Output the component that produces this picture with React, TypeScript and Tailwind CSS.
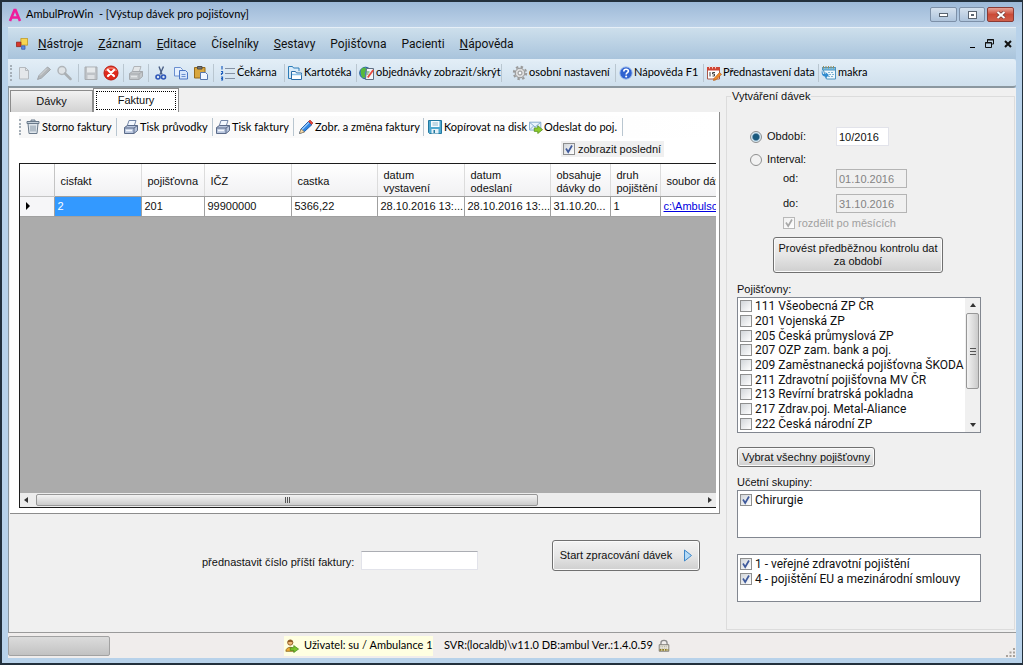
import React, { useState } from 'react';

const SANS = "font-['Liberation_Sans',Arial,sans-serif]";
const COMPACT = "font-[Roboto,'Liberation_Sans',sans-serif]";
const HUMANIST = "font-[Lato,'Open_Sans',sans-serif]";

const insurers = [
  '111 Všeobecná ZP ČR',
  '201 Vojenská ZP',
  '205 Česká průmyslová ZP',
  '207 OZP zam. bank a poj.',
  '209 Zaměstnanecká pojišťovna ŠKODA',
  '211 Zdravotní pojišťovna MV ČR',
  '213 Revírní bratrská pokladna',
  '217 Zdrav.poj. Metal-Aliance',
  '222 Česká národní ZP',
];

const menu = [
  ['N', 'ástroje'],
  ['Z', 'áznam'],
  ['E', 'ditace'],
  ['', 'Číselníky'],
  ['S', 'estavy'],
  ['', 'Pojišťovna'],
  ['', 'Pacienti'],
  ['N', 'ápověda'],
];

const columns = [
  { label: 'cisfakt', value: '2', width: 'w-[87px]' },
  { label: 'pojišťovna', value: '201', width: 'w-[63px]' },
  { label: 'IČZ', value: '99900000', width: 'w-[87px]' },
  { label: 'castka', value: '5366,22', width: 'w-[86px]' },
  { label: 'datum\nvystavení', value: '28.10.2016 13:...', width: 'w-[87px]' },
  { label: 'datum\nodeslaní', value: '28.10.2016 13:...', width: 'w-[86px]' },
  { label: 'obsahuje\ndávky do', value: '31.10.20...', width: 'w-[60px]' },
  { label: 'druh\npojištění', value: '1', width: 'w-[50px]' },
];

type IconProps = { children: React.ReactNode; className?: string };

const Svg = ({ children, className = 'size-4' }: IconProps) => (
  <svg viewBox="0 0 16 16" className={`${className} shrink-0`} fill="none" aria-hidden="true">
    {children}
  </svg>
);

const NewIcon = () => (
  <Svg>
    <path d="M3.500 2.500h6l3 3v8.500h-9z" fill="#e4e7ea" stroke="#b4b9be" />
    <path d="M9.500 2.500v3h3" stroke="#b4b9be" />
  </Svg>
);

const GrayPencilIcon = () => (
  <Svg>
    <path d="M1.500 14.500l1.500-4 8.500-8.500 3 2.500-9 8.500z" fill="#b3b7ba" stroke="#a0a4a8" />
    <path d="M4 10.500l7-7" stroke="#d8dbde" />
  </Svg>
);

const GraySearchIcon = () => (
  <Svg>
    <circle cx="6" cy="5.500" r="4" fill="#dfe3e6" stroke="#b0b5b9" strokeWidth="1.500" />
    <path d="M9 8.500l5.500 5.500" stroke="#aaafb3" strokeWidth="2.500" strokeLinecap="round" />
  </Svg>
);

const GraySaveIcon = () => (
  <Svg>
    <path d="M2 2h12v12.500H2z" fill="#bfc3c7" stroke="#a9adb1" />
    <path d="M4 2.500h8v5H4z" fill="#e6e9eb" />
    <path d="M4.500 10h7v4h-7z" fill="#dde0e3" />
  </Svg>
);

const CancelIcon = () => (
  <Svg>
    <circle cx="8" cy="8" r="7" fill="#e02a1c" stroke="#b81c12" />
    <path d="M2.500 6a6 5 0 0111 0" stroke="#f47c6c" strokeWidth="1.500" />
    <path d="M5 5l6 6M11 5l-6 6" stroke="#fff" strokeWidth="2.200" strokeLinecap="round" />
  </Svg>
);

const PrinterIcon = ({ muted }: { muted?: boolean }) => (
  <Svg>
    <path d="M6 1.500h7l-2 6H4z" fill={muted ? '#e3e6e8' : '#f3f8ff'} stroke={muted ? '#b0b4b8' : '#7487a8'} />
    <path d="M1.500 8.500l3-2h10v5l-3.500 3h-9.500z" fill={muted ? '#c3c7ca' : '#b9c6de'} stroke={muted ? '#a6aaae' : '#5b6b89'} />
    <path d="M1.500 9h9.500l3.500-2.500M11 9v5" stroke={muted ? '#a6aaae' : '#5b6b89'} />
    <path d="M3 11.500h6" stroke={muted ? '#e3e6e8' : '#f5f8fd'} strokeWidth="1.500" />
  </Svg>
);

const CutIcon = () => (
  <Svg>
    <path d="M6 1.500l3 8M10.500 1.500l-3.500 8" stroke="#4a5f86" strokeWidth="1.400" />
    <circle cx="5" cy="12" r="2" stroke="#2f57b8" strokeWidth="1.600" />
    <circle cx="10.500" cy="12" r="2" stroke="#2f57b8" strokeWidth="1.600" />
  </Svg>
);

const CopyIcon = () => (
  <Svg>
    <path d="M1.500 2.500h6l2 2v6.500h-8z" fill="#e6f0fd" stroke="#6a8fd0" />
    <path d="M6.500 5.500h6l2 2v6.500h-8z" fill="#d4e4fb" stroke="#4a74c4" />
    <path d="M8.500 9.500h4M8.500 11.500h4" stroke="#6a8fd0" />
  </Svg>
);

const PasteIcon = () => (
  <Svg>
    <path d="M1.500 2.500h10.500v10.500H1.500z" fill="#d9a73e" stroke="#946a1c" />
    <path d="M4.500 1.500h4.500v2.500H4.500z" fill="#777" stroke="#4c4c4c" />
    <path d="M7.500 7.500h5l2 2v5h-7z" fill="#f0f5ff" stroke="#5877ae" />
  </Svg>
);

const ListIcon = () => (
  <Svg>
    <path d="M5 3.500h10M5 8.500h10M5 13.500h10" stroke="#8492a5" />
    <path d="M2 1v3.500M1 6.500h1.500v2H1.500v1.500M1 12h1.500v3H1M1 13.500h1.500" stroke="#1d5fbf" strokeWidth="1.200" />
  </Svg>
);

const CardsIcon = () => (
  <Svg>
    <path d="M1.500 5V1.500h4l1 1.500h5.500v3" fill="#d9ecfb" stroke="#2d7db8" />
    <path d="M1.500 4v9.500h2.500" stroke="#2d7db8" />
    <path d="M4.500 6.500h4l1 1.500h5v6.500h-10z" fill="#fff" stroke="#2a6da8" />
    <path d="M5 9.500h9.500" stroke="#8dc3ea" strokeWidth="1.500" />
  </Svg>
);

const OrdersIcon = () => (
  <Svg>
    <circle cx="6.500" cy="8" r="5.800" fill="#3e8ede" stroke="#235a96" />
    <path d="M2 4.500c3-3 5-2 5 0s-2 3-1 5 0 3-1.500 3.500S1 8 2 4.500z" fill="#58b83a" />
    <path d="M7.500 3.500h7v11h-8z" fill="#f3f6fa" stroke="#5f6f83" />
    <path d="M8 12l5.500-7.500 1.500 1-5.500 7.500z" fill="#e94b3f" />
    <path d="M7.500 7h3M7.500 9h2" stroke="#3c9a46" />
  </Svg>
);

const GearIcon = () => (
  <Svg>
    <circle cx="8" cy="8" r="6.200" stroke="#9b9b9b" strokeWidth="2" strokeDasharray="2.400 2.460" />
    <circle cx="8" cy="8" r="4.800" fill="#dcdcdc" stroke="#929292" />
    <circle cx="8" cy="8" r="2" fill="#f4f8fb" stroke="#929292" />
  </Svg>
);

const HelpIcon = () => (
  <Svg className="size-[14px]">
    <circle cx="8" cy="8" r="7" fill="#2f62d0" stroke="#8fb0ea" />
    <path d="M5.500 6.200c0-3.400 5.200-3.200 5.200-.4 0 1.800-2.500 1.900-2.500 3.900" stroke="#fff" strokeWidth="1.900" />
    <circle cx="8.200" cy="12" r="1.200" fill="#fff" />
  </Svg>
);

const CalendarIcon = () => (
  <Svg>
    <path d="M1.500 2.500h12v11.500h-12z" fill="#fff" stroke="#a8584a" />
    <path d="M1 2h13v3.500H1z" fill="#cf4534" />
    <path d="M3.500 1v2.500M6.500 1v2.500M9.500 1v2.500" stroke="#f6d4cd" />
    <path d="M4 7v4.500M9 7.500H6.500v1.500h2v2h-2" stroke="#444" />
    <path d="M8 13.500l5.500-6 2 1.800-5.500 5.500-2.500.7z" fill="#f18a2c" stroke="#b75d13" strokeWidth=".7" />
  </Svg>
);

const MacroIcon = () => (
  <Svg>
    <path d="M1.500 2.500h13v11.500h-9z" fill="#eef7fd" stroke="#4d94c0" />
    <path d="M1.500 2.500h13v2.500h-13z" fill="#7cc3e8" stroke="#4d94c0" />
    <path d="M2.500 1v2.500M5 1v2.500M7.500 1v2.500M10 1v2.500M12.500 1v2.500" stroke="#9a8f5c" />
    <path d="M7 7.500h6M8 9.500h5M7 11.500h6" stroke="#7fb4d2" strokeDasharray="2 1" />
    <path d="M1 5l1 4h2.500V7L8 10l-3.500 3.500v-2C1.500 11.500 0 9 1 5z" fill="#2f8bd0" />
  </Svg>
);

const TrashIcon = () => (
  <Svg>
    <path d="M3 4.500h10l-1 10H4z" fill="#dfe6ec" stroke="#69798a" />
    <path d="M2 2.500h12v2H2zM6 2.500V1h4v1.500" fill="#c4d0da" stroke="#69798a" />
    <path d="M6 6.500v6M8 6.500v6M10 6.500v6" stroke="#8394a4" />
  </Svg>
);

const PencilIcon = () => (
  <Svg>
    <path d="M1.500 14.500l1.500-4.500 7.500-7.500 3.500 3-8 7.500z" fill="#2f86e4" stroke="#1b5cae" />
    <path d="M4 10.500l7-7" stroke="#9dcbf8" strokeWidth="1.300" />
    <path d="M10.500 2.500L12 1l3 3-1.500 1.500z" fill="#e8443a" stroke="#a62a22" strokeWidth=".6" />
    <path d="M1.500 14.500l1.500-4.500 3.500 3z" fill="#f7dcae" stroke="#9c7c49" strokeWidth=".6" />
  </Svg>
);

const DiskIcon = () => (
  <Svg>
    <path d="M1.500 1.500h13v13h-12l-1-1z" fill="#4fa8cf" stroke="#22789f" />
    <path d="M4 2h8.500v6H4z" fill="#f6fbfe" />
    <path d="M5.500 4h5.500M5.500 6h5.500" stroke="#8bb7cb" />
    <path d="M4.500 10h7v4.500h-7z" fill="#e6f1f6" />
    <path d="M6.500 11h1.500v3H6.500z" fill="#22789f" />
  </Svg>
);

const MailIcon = () => (
  <Svg className="size-[14px]">
    <path d="M.5 2.500h13v9H.5z" fill="#e9f3fc" stroke="#7aa3c8" />
    <path d="M1 3l6 5 6-5M1 11l4-4M13 11L9 7" stroke="#7aa3c8" />
    <path d="M6 9h4V6.500l5.500 4.500-5.500 4.500V13H6z" fill="#8ecb2c" stroke="#4a8a12" strokeWidth=".8" />
  </Svg>
);

const UserIcon = () => (
  <Svg className="size-[14px]">
    <circle cx="6" cy="4" r="3" fill="#f0b878" stroke="#8c5a22" />
    <path d="M3 4c0-4 6-4 6 0-2-1-4-1-6 0z" fill="#8a5420" />
    <path d="M1 14c0-6 10-6 10 0z" fill="#f3ae35" stroke="#8c6a22" />
    <path d="M6 10h4V7.500l5.500 4-5.500 4V13H6z" fill="#7cc42a" stroke="#3e8414" strokeWidth=".8" />
  </Svg>
);

const LockIcon = () => (
  <Svg className="size-[14px]">
    <path d="M4.500 7V4.500a3.500 3 0 017 0V7" stroke="#8b8b8b" strokeWidth="1.500" />
    <path d="M2.500 6.500h11v7.500h-11z" fill="#e9e6da" stroke="#77756e" />
    <path d="M3 12.500h10" stroke="#8d7a1e" strokeWidth="2" strokeDasharray="2 1" />
    <path d="M4 8.500h8M4 10.500h8" stroke="#aaa89e" strokeDasharray="1 1" />
  </Svg>
);

const FormsIcon = () => (
  <Svg className="size-3">
    <path d="M6.500.5h9v9h-9z" fill="#f8d552" stroke="#b78f1a" />
    <path d="M.5 5.500h6v6h-6z" fill="#d8362a" stroke="#8e1f17" />
    <path d="M7.500 10.500h4.500v4.500H7.500z" fill="#5d8be4" stroke="#3559a8" />
  </Svg>
);

const Grip = () => (
  <span className="flex h-4 w-[2px] shrink-0 flex-col justify-between">
    {[0, 1, 2, 3, 4].map(i => <span key={i} className="size-[2px] bg-[#a5afb8]" />)}
  </span>
);

const Separator = () => <span className="h-[18px] w-px shrink-0 bg-[#b9c6d0]" />;

interface ToolButtonProps {
  icon: React.ReactNode;
  label?: string;
  title?: string;
  className?: string;
}

const ToolButton = ({ icon, label, title, className = '' }: ToolButtonProps) => (
  <button type="button" aria-label={label ?? title} className={`flex shrink-0 items-center gap-px whitespace-nowrap ${className}`}>
    {icon}
    {label && <span>{label}</span>}
  </button>
);

interface CheckProps {
  label: string;
  checked?: boolean;
  disabled?: boolean;
  className?: string;
}

const Check = ({ label, checked = false, disabled, className = '' }: CheckProps) => {
  const [on, setOn] = useState(checked);
  return (
    <label className={`flex items-center gap-[3px] whitespace-nowrap ${disabled ? 'text-[#a0a0a0]' : ''} ${className}`}>
      <span className="relative flex size-3 shrink-0">
        <input
          type="checkbox"
          checked={on}
          disabled={disabled}
          onChange={e => setOn(e.target.checked)}
          className="size-3 appearance-none border border-[#8e8f8f] bg-linear-to-br from-[#d2d6da] to-white disabled:border-[#b8b8b8] disabled:from-[#f0f0f0]"
        />
        {on && (
          <svg viewBox="0 0 12 12" className="pointer-events-none absolute inset-0 size-3" fill="none" aria-hidden="true">
            <path d="M3 5.500l2.200 3.500L9 2.500" stroke={disabled ? '#a8a8a8' : '#3f5a9c'} strokeWidth="1.700" />
          </svg>
        )}
      </span>
      <span>{label}</span>
    </label>
  );
};

const BUTTON = 'rounded-[3px] border border-[#707070] bg-linear-to-b from-[#f3f3f3] via-[#e6e6e6] to-[#cfcfcf] shadow-[inset_0_0_0_1px_#fbfbfb]';

const WindowButtons = () => (
  <div className="flex gap-[2px]">
    <button type="button" aria-label="Minimalizovat" className="flex h-[15px] w-[27px] items-center justify-center rounded-[2px] border border-[#7d90a8] bg-linear-to-b from-[#d5e1ee] to-[#aec4dc]">
      <span className="h-1 w-[9px] border border-[#5a6572] bg-white" />
    </button>
    <button type="button" aria-label="Obnovit" className="flex h-[15px] w-[26px] items-center justify-center rounded-[2px] border border-[#7d90a8] bg-linear-to-b from-[#d5e1ee] to-[#aec4dc]">
      <span className="flex h-2 w-[9px] items-center justify-center border border-[#5a6572] bg-white">
        <span className="h-[2px] w-[3px] bg-[#5a6572]" />
      </span>
    </button>
    <button type="button" aria-label="Zavřít" className="flex h-[15px] w-[27px] items-center justify-center rounded-[2px] border border-[#8a3a34] bg-linear-to-b from-[#e5a196] via-[#cb4a37] to-[#d0604c]">
      <svg viewBox="0 0 10 8" className="h-2 w-[10px]" aria-hidden="true">
        <path d="M1.500 1l7 6M8.500 1l-7 6" stroke="#6b3a38" strokeWidth="3.400" />
        <path d="M1.500 1l7 6M8.500 1l-7 6" stroke="#fff" strokeWidth="2" />
      </svg>
    </button>
  </div>
);

const MainToolbar = () => (
  <div className={`flex h-[29px] items-center overflow-hidden rounded-r-[3px] border-b-2 border-[#8b979f] bg-linear-to-b from-[#e3eef7] to-[#cfe0ed] pl-[2px] text-[11px] text-black ${HUMANIST}`}>
    <Grip />
    <div className="flex items-center gap-1 pl-1 pr-[6px]">
      <ToolButton title="Nový" icon={<NewIcon />} />
      <ToolButton title="Upravit" icon={<GrayPencilIcon />} />
      <ToolButton title="Hledat" icon={<GraySearchIcon />} />
    </div>
    <Separator />
    <div className="flex items-center gap-1 px-1">
      <ToolButton title="Uložit" icon={<GraySaveIcon />} />
      <ToolButton title="Zrušit" icon={<CancelIcon />} />
    </div>
    <Separator />
    <ToolButton title="Tisk" icon={<PrinterIcon muted />} className="px-1" />
    <Separator />
    <div className="flex items-center gap-1 px-1">
      <ToolButton title="Vyjmout" icon={<CutIcon />} />
      <ToolButton title="Kopírovat" icon={<CopyIcon />} />
      <ToolButton title="Vložit" icon={<PasteIcon />} />
    </div>
    <Separator />
    <ToolButton label="Čekárna" icon={<ListIcon />} className="w-[70px] pl-[6px]" />
    <Separator />
    <ToolButton label="Kartotéka" icon={<CardsIcon />} className="w-[71px] pl-[2px]" />
    <Separator />
    <ToolButton label="objednávky zobrazit/skrýt" icon={<OrdersIcon />} className="w-[144px] pl-[2px]" />
    <Separator />
    <ToolButton label="osobní nastavení" icon={<GearIcon />} className="w-[113px] pl-[10px]" />
    <Separator />
    <ToolButton label="Nápověda F1" icon={<HelpIcon />} className="w-[87px] pl-[3px]" />
    <Separator />
    <ToolButton label="Přednastavení data" icon={<CalendarIcon />} className="w-[114px] pl-[2px]" />
    <Separator />
    <ToolButton label="makra" icon={<MacroIcon />} className="pl-[2px]" />
  </div>
);

const InvoiceTable = () => (
  <div className="flex min-h-0 flex-1 flex-col overflow-hidden border border-r-0 border-[#1c1c1c] bg-[#ababab]">
    <div className="min-h-0 flex-1 overflow-hidden">
      <table className="w-[800px] table-fixed border-collapse text-[11px]">
        <thead>
          <tr className="h-8 bg-linear-to-b from-white to-[#f1f1f3] text-left leading-[13px]">
            <th className="w-[34px] border-r border-b border-[#c4c4c4]" aria-label="řádek" />
            {columns.map(col => (
              <th key={col.label} className={`${col.width} border-r border-b border-r-[#dcdcdc] border-b-[#a0a0a0] pt-1 pl-[6px] font-normal whitespace-pre`}>{col.label}</th>
            ))}
            <th className="border-b border-[#a0a0a0] pt-1 pl-[6px] font-normal whitespace-nowrap">soubor dávky</th>
          </tr>
        </thead>
        <tbody>
          <tr className="h-5 bg-white">
            <td className="border-r border-b border-[#a0a0a0] bg-[#f6f6f8]">
              <svg viewBox="0 0 4 8" className="ml-[6px] h-2 w-1" aria-hidden="true"><path d="M0 0l4 4-4 4z" fill="#000" /></svg>
            </td>
            {columns.map((col, i) => (
              <td key={col.label} className={`overflow-hidden border-r border-b border-[#a0a0a0] pl-[3px] whitespace-nowrap ${i === 0 ? 'bg-[#3399ff] text-white' : ''}`}>{col.value}</td>
            ))}
            <td className="border-b border-[#a0a0a0] pl-[3px]">
              <a href="#soubor" className="text-[#0000e0] underline">c:\Ambulsoft</a>
            </td>
          </tr>
        </tbody>
      </table>
    </div>
    <div className="flex h-[14px] shrink-0 items-center bg-[#ececec] px-1">
      <svg viewBox="0 0 4 6" className="h-[6px] w-1" aria-hidden="true"><path d="M4 0L0 3l4 3z" fill="#333" /></svg>
      <div className="ml-2 flex h-3 w-[73%] items-center justify-center gap-px rounded-[2px] border border-[#979797] bg-linear-to-b from-[#f3f3f3] to-[#cbcbcb]">
        {[0, 1, 2].map(i => <span key={i} className="h-[6px] w-px bg-[#555]" />)}
      </div>
      <svg viewBox="0 0 4 6" className="ml-auto h-[6px] w-1" aria-hidden="true"><path d="M0 0l4 3-4 3z" fill="#333" /></svg>
    </div>
  </div>
);

const InvoicePanel = () => (
  <div className="flex h-[402px] flex-col border-r border-b border-[#8c8c8c] bg-white pt-1 pr-[3px] pb-[5px] pl-[9px]">
    <div className={`flex h-[22px] shrink-0 items-center overflow-hidden bg-linear-to-r from-[#f7f7f7] to-white text-[11px] text-black ${HUMANIST}`}>
      <Grip />
      <ToolButton label="Storno faktury" icon={<TrashIcon />} className="w-[95px] pl-1" />
      <Separator />
      <ToolButton label="Tisk průvodky" icon={<PrinterIcon />} className="w-[95px] pl-[6px]" />
      <Separator />
      <ToolButton label="Tisk faktury" icon={<PrinterIcon />} className="w-20 pl-[2px]" />
      <Separator />
      <ToolButton label="Zobr. a změna faktury" icon={<PencilIcon />} className="w-[129px] pl-1" />
      <Separator />
      <ToolButton label="Kopírovat na disk" icon={<DiskIcon />} className="w-[102px] pl-[3px]" />
      <ToolButton label="Odeslat do poj." icon={<MailIcon />} className="w-24 pl-[3px]" />
      <Separator />
    </div>
    <div className="flex h-[25px] shrink-0 justify-end pt-[3px] pr-[52px]">
      <Check label="zobrazit poslední" checked className="h-4 w-[103px] bg-[#f0f0f0] px-[2px]" />
    </div>
    <InvoiceTable />
  </div>
);

const TextField = ({ id, value, disabled }: { id: string; value: string; disabled?: boolean }) => (
  <input
    id={id}
    type="text"
    defaultValue={value}
    disabled={disabled}
    className="h-[19px] w-[71px] border border-[#b4b4b4] bg-[#f0f0f0] px-[2px] text-[#838383]"
  />
);

const BatchForm = () => {
  const [mode, setMode] = useState('period');
  const radio = 'size-3 shrink-0 appearance-none rounded-full border border-[#8e8f8f] bg-[#f2f2f2] checked:bg-radial checked:from-[#1a5a7e] checked:from-40% checked:to-[#d3e8f3] checked:to-60%';

  return (
    <fieldset className="flex w-[289px] shrink-0 flex-col border border-[#dcdcdc] px-[10px] text-[11px]">
      <legend className="-ml-[6px] h-4 px-px leading-4">Vytváření dávek</legend>
      <div className="mt-2 ml-[13px] flex h-[34px] items-end">
        <label className="flex h-[19px] w-[86px] items-center gap-[5px]">
          <input type="radio" name="mode" checked={mode === 'period'} onChange={() => setMode('period')} className={radio} />
          Období:
        </label>
        <input aria-label="Období" type="text" defaultValue="10/2016" className="h-[19px] w-[53px] border border-[#e2e3ea] bg-white px-[2px]" />
      </div>
      <label className="mt-1 ml-[13px] flex h-[19px] items-center gap-[5px]">
        <input type="radio" name="mode" checked={mode === 'interval'} onChange={() => setMode('interval')} className={radio} />
        Interval:
      </label>
      <div className="ml-[46px] grid grid-cols-[53px_71px] items-center gap-y-[6px]">
        <label htmlFor="from">od:</label>
        <TextField id="from" value="01.10.2016" disabled />
        <label htmlFor="to">do:</label>
        <TextField id="to" value="31.10.2016" disabled />
      </div>
      <Check label="rozdělit po měsících" checked disabled className="mt-[2px] ml-[46px] h-4" />
      <button type="button" className={`${BUTTON} mt-[6px] ml-9 h-9 w-[170px] leading-[13px]`}>
        Provést předběžnou kontrolu dat za období
      </button>

      <div className="mt-2 h-4 leading-4">Pojišťovny:</div>
      <div className={`flex h-[136px] w-[244px] border border-[#828790] bg-white text-[12px] ${COMPACT}`}>
        <div className="flex min-w-0 flex-1 flex-col py-px pl-[2px]">
          {insurers.map(name => <Check key={name} label={name} className="flex-1 leading-[14px]" />)}
        </div>
        <div className="flex w-[15px] flex-col items-center bg-[#f0f0f0] py-[5px]">
          <svg viewBox="0 0 6 4" className="h-1 w-[6px]" aria-hidden="true"><path d="M0 4l3-4 3 4z" fill="#333" /></svg>
          <div className="mt-[6px] flex h-[76px] w-[13px] flex-col items-center justify-center gap-[2px] rounded-[2px] border border-[#979797] bg-linear-to-r from-[#f3f3f3] to-[#cbcbcb]">
            {[0, 1, 2].map(i => <span key={i} className="h-px w-[6px] bg-[#555]" />)}
          </div>
          <svg viewBox="0 0 6 4" className="mt-auto h-1 w-[6px]" aria-hidden="true"><path d="M0 0l3 4 3-4z" fill="#333" /></svg>
        </div>
      </div>

      <button type="button" className={`${BUTTON} mt-[14px] h-5 w-[138px] whitespace-nowrap leading-4`}>Vybrat všechny pojišťovny</button>
      <div className="mt-[7px] h-4 leading-4">Učetní skupiny:</div>
      <div className={`h-12 w-[244px] border border-[#828790] bg-white pt-px pl-[2px] text-[12px] ${COMPACT}`}>
        <Check label="Chirurgie" checked className="h-[15px]" />
      </div>
      <div className={`mt-4 h-12 w-[244px] border border-[#828790] bg-white pt-px pl-[2px] text-[12px] ${COMPACT}`}>
        <Check label="1 - veřejné zdravotní pojištění" checked className="h-[15px]" />
        <Check label="4 - pojištění EU a mezinárodní smlouvy" checked className="h-[15px]" />
      </div>
    </fieldset>
  );
};

export default function App() {
  return (
    <div className={`flex h-screen flex-col overflow-hidden border-2 border-r border-[#23303c] bg-[#b8d2ea] px-[6px] pb-[5px] text-[11px] text-[#101010] ${SANS}`}>
      <header className="-mx-[6px] flex h-[25px] shrink-0 items-center gap-1 bg-linear-to-b from-[#9db9d8] to-[#bdd2e8] pr-2 pl-[6px]">
        <svg viewBox="0 0 14 14" className="size-[14px]" aria-hidden="true">
          <path d="M2 13L6.500 2h1L12 13M4 9.500h6" fill="none" stroke="#ee1c9c" strokeWidth="2.600" />
        </svg>
        <h1 className={`text-[11px] text-black whitespace-pre ${HUMANIST}`}>AmbulProWin  - [Výstup dávek pro pojišťovny]</h1>
        <div className="ml-auto"><WindowButtons /></div>
      </header>

      <nav className={`flex h-8 shrink-0 items-center border-t border-[#e6eff7] bg-linear-to-b from-[#cddfec] to-[#a9c4dc] pl-2 text-[12px] ${COMPACT}`}>
        <FormsIcon />
        <div className="ml-[10px] flex gap-[15px]">
          {menu.map(([key, rest]) => (
            <button key={rest} type="button"><u>{key}</u>{rest}</button>
          ))}
        </div>
        <div className="ml-auto flex items-center gap-[10px] pr-1">
          <button type="button" aria-label="Minimalizovat okno" className="flex h-[9px] items-end"><span className="h-px w-[5px] bg-black" /></button>
          <button type="button" aria-label="Obnovit okno">
            <svg viewBox="0 0 9 9" className="size-[9px]" fill="none" stroke="#111" aria-hidden="true"><path d="M2.500 3V.5h6v4.500H6.500M2 1h7M.5 3.500h6v5h-6zM0 4h7" /></svg>
          </button>
          <button type="button" aria-label="Zavřít okno">
            <svg viewBox="0 0 8 8" className="size-2" stroke="#111" strokeWidth="2" aria-hidden="true"><path d="M1 1l6 6M7 1L1 7" /></svg>
          </button>
        </div>
      </nav>

      <MainToolbar />

      <main className="flex min-h-0 flex-1 border-l border-[#8b979f] bg-[#f0f0f0] pr-px pb-[2px] pl-px">
        <section className="mr-[6px] flex min-w-0 flex-1 flex-col">
          <div className="flex h-6 shrink-0 items-end">
            <button type="button" className="h-[22px] w-[83px] border border-b-0 border-[#8c8c8c] bg-linear-to-b from-[#f2f2f2] to-[#d2d2d2]">Dávky</button>
            <button type="button" className="h-6 w-[86px] border border-b-0 border-[#8c8c8c] bg-white p-[2px]">
              <span className="flex h-full items-center justify-center border border-dotted border-black">Faktury</span>
            </button>
          </div>
          <InvoicePanel />
          <div className="flex flex-1 items-start pt-[26px] pl-[192px]">
            <label htmlFor="next" className="mt-[14px] w-[159px] whitespace-nowrap">přednastavit číslo příští faktury:</label>
            <input id="next" type="text" className="mt-[11px] h-[19px] w-[117px] border border-[#e2e3ea] border-t-[#abadb3] bg-white px-1" />
            <button type="button" className={`${BUTTON} mr-5 ml-auto flex h-[31px] w-[148px] items-center justify-center gap-3 whitespace-nowrap`}>
              Start zpracování dávek
              <svg viewBox="0 0 8 13" className="h-[13px] w-2" aria-hidden="true"><path d="M.5 1l7 5.500-7 5.500z" fill="#b5dbf7" stroke="#3c86c8" /></svg>
            </button>
          </div>
        </section>
        <BatchForm />
      </main>

      <footer className={`flex h-[26px] shrink-0 items-center border-t border-[#9a9a9a] bg-[#f0edec] text-[11px] text-black ${HUMANIST}`}>
        <div className="h-5 w-[102px] rounded-[2px] border border-[#a2a2a2] bg-linear-to-b from-[#dcdcdc] to-[#c2c2c2]" />
        <div className="ml-[174px] flex h-5 w-[149px] items-center gap-[5px] bg-[#ffffe1] pl-px whitespace-nowrap">
          <UserIcon />
          Uživatel: su / Ambulance 1
        </div>
        <div className="mr-1 ml-[11px] min-w-[201px] whitespace-nowrap">SVR:(localdb)\v11.0 DB:ambul Ver.:1.4.0.59</div>
        <LockIcon />
        <svg viewBox="0 0 9 9" className="mt-auto mr-px mb-px ml-auto size-[9px]" fill="#a8a29c" aria-hidden="true">
          <path d="M7 0h2v2H7zM7 3.500h2v2H7zM3.500 3.500h2v2h-2zM7 7h2v2H7zM3.500 7h2v2h-2zM0 7h2v2H0z" />
        </svg>
      </footer>
    </div>
  );
}
